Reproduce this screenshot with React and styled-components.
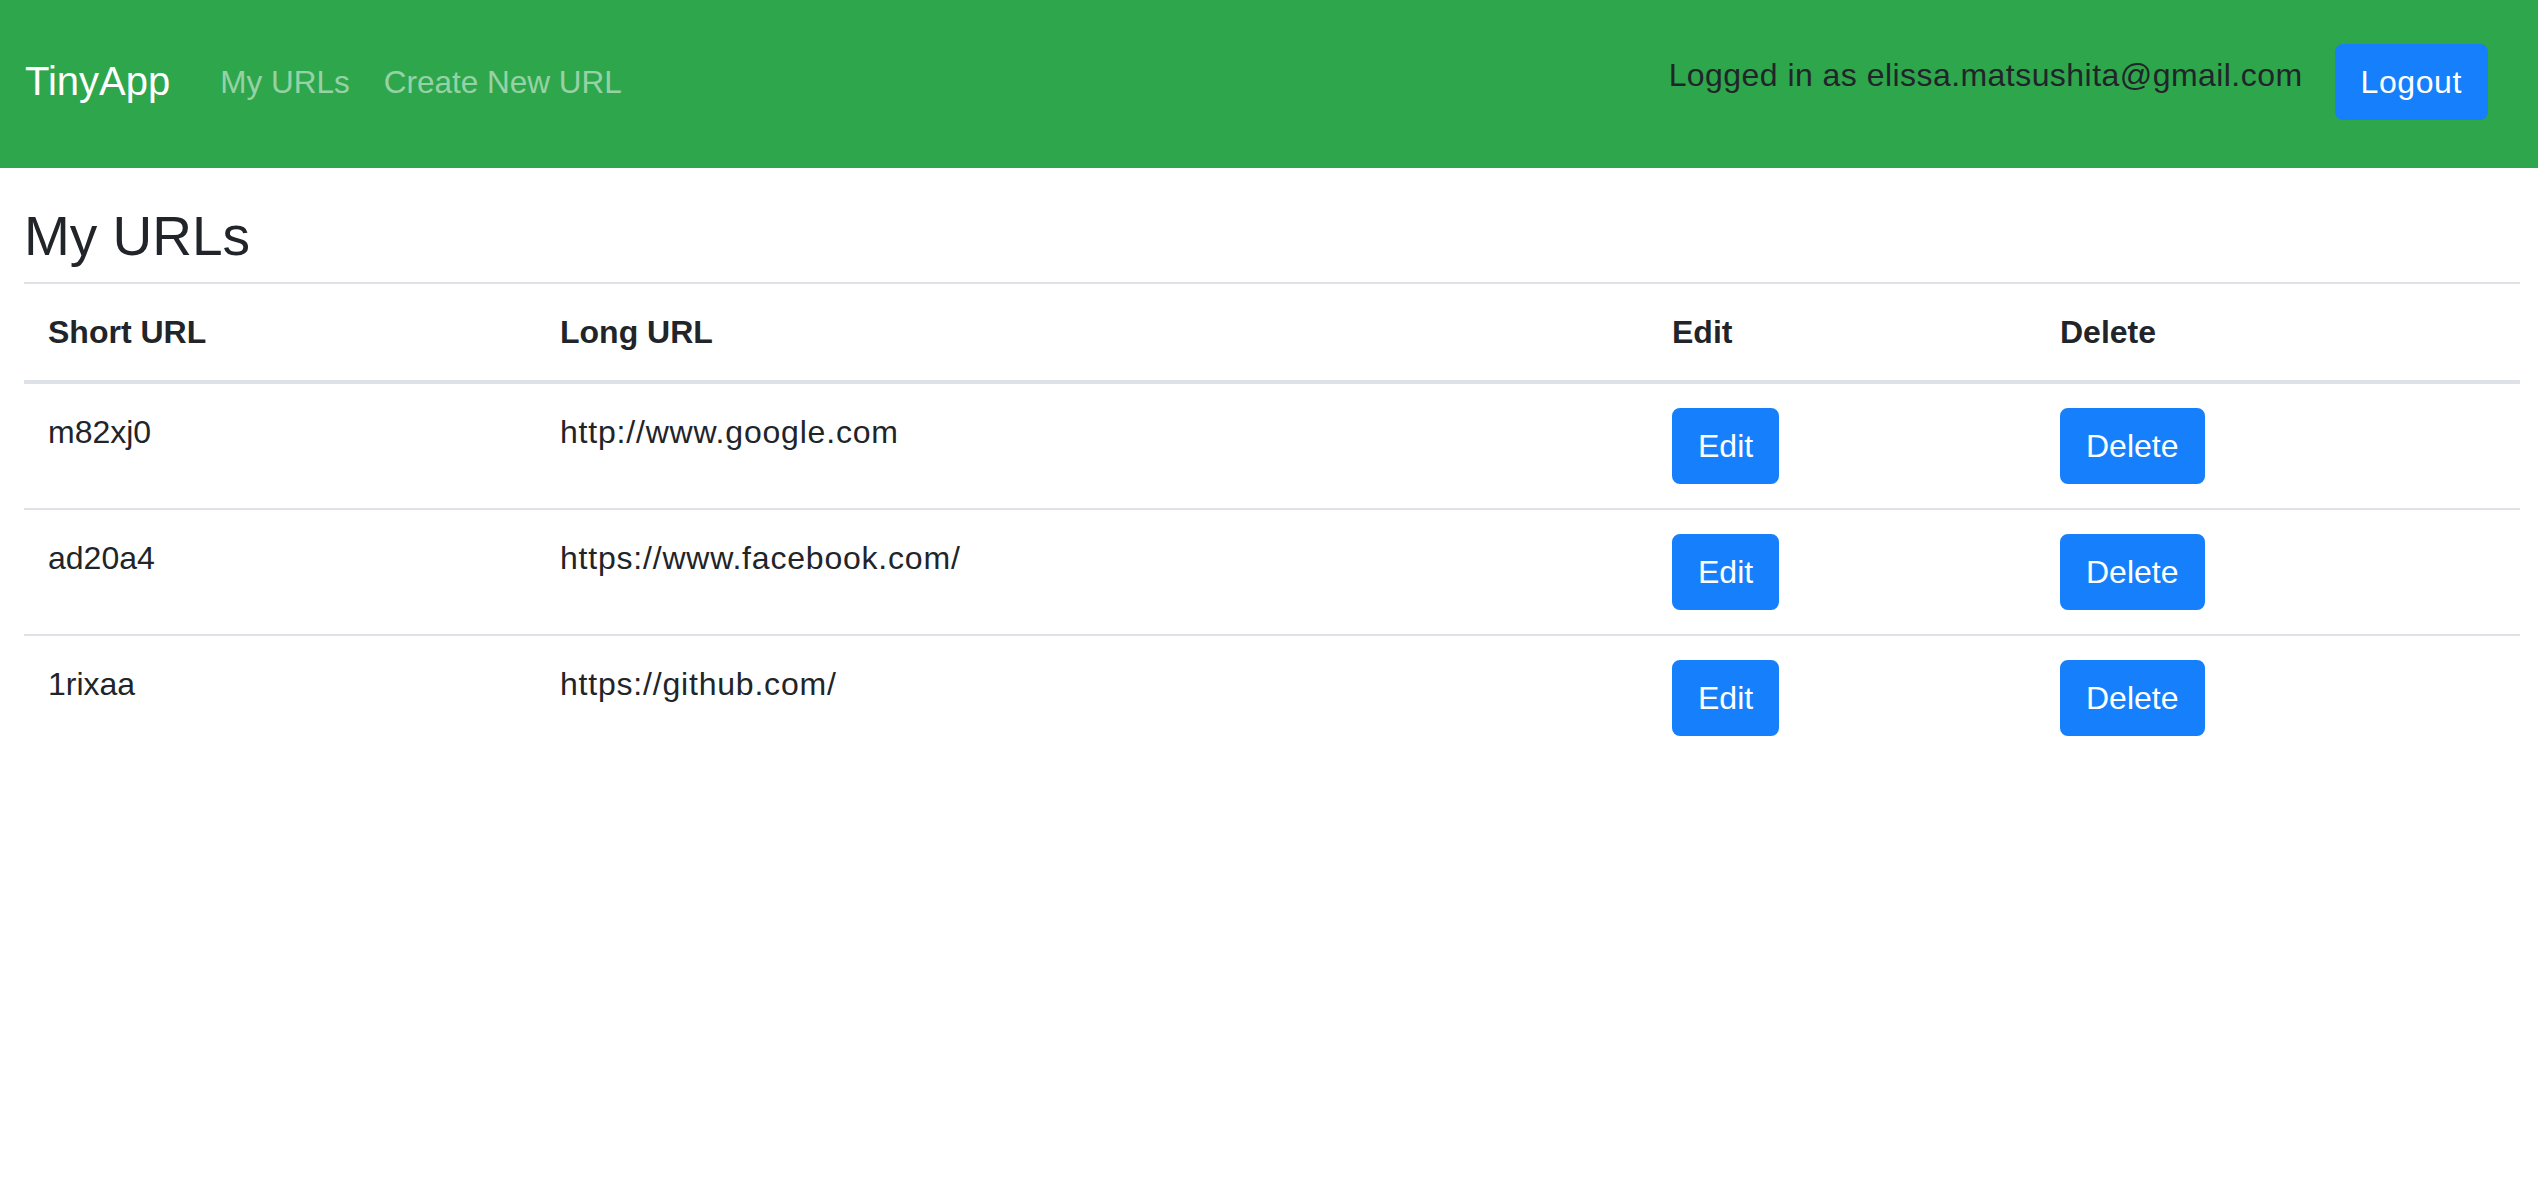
import React from "react";
import styled, { createGlobalStyle } from "styled-components";

const GlobalStyle = createGlobalStyle`
  html, body {
    margin: 0;
    padding: 0;
    background: #ffffff;
  }
  body {
    font-family: "Liberation Sans", Arial, sans-serif;
    color: #212529;
  }
  * { box-sizing: border-box; }
`;

const NavBar = styled.nav`
  display: flex;
  align-items: center;
  height: 168px;
  padding: 0 50px 0 25px;
  background: #2ea64c;
`;

const Brand = styled.a`
  font-size: 40px;
  line-height: 60px;
  color: #ffffff;
  text-decoration: none;
  margin-right: 50px;
  margin-bottom: 6px;
`;

const NavLinks = styled.div`
  display: flex;
  gap: 34px;
  margin-bottom: 4px;
`;

const NavLink = styled.a`
  font-size: 31.5px;
  line-height: 48px;
  color: rgba(255, 255, 255, 0.5);
  text-decoration: none;
`;

const Spacer = styled.div`
  flex: 1;
`;

const UserText = styled.span`
  font-size: 32px;
  line-height: 48px;
  letter-spacing: 0.45px;
  color: #212529;
  margin-right: 32px;
  margin-bottom: 18px;
`;

const Button = styled.button`
  display: inline-flex;
  align-items: center;
  justify-content: center;
  height: 76px;
  padding: 0 24px;
  font-family: inherit;
  font-size: 32px;
  line-height: 48px;
  letter-spacing: ${(p) => (p.$nav ? "0.6px" : "0")};
  color: #ffffff;
  background: #167ffc;
  border: 2px solid #167ffc;
  border-radius: 8px;
  cursor: pointer;
  margin-bottom: ${(p) => (p.$nav ? "4px" : "0")};
`;

const Main = styled.main`
  padding: 35px 18px 0 24px;
`;

const Heading = styled.h3`
  margin: 0 0 13px;
  font-size: 55px;
  line-height: 66px;
  font-weight: 400;
  color: #212529;
`;

const Table = styled.table`
  width: 100%;
  border-collapse: collapse;
  table-layout: fixed;
`;

const Th = styled.th`
  padding: 24px;
  text-align: left;
  font-size: 32px;
  line-height: 48px;
  font-weight: 700;
  color: #212529;
  vertical-align: bottom;
  border-top: 2px solid #dee2e6;
  border-bottom: 4px solid #dee2e6;
`;

const Td = styled.td`
  padding: 24px;
  font-size: 32px;
  line-height: 48px;
  letter-spacing: ${(p) => (p.$url ? "0.8px" : "0")};
  color: #212529;
  vertical-align: top;
  border-top: 2px solid #dee2e6;
`;

const CellActions = styled.div`
  display: flex;
`;

const rows = [
  { short: "m82xj0", long: "http://www.google.com" },
  { short: "ad20a4", long: "https://www.facebook.com/" },
  { short: "1rixaa", long: "https://github.com/" },
];

export default function App() {
  return (
    <>
      <GlobalStyle />
      <NavBar>
        <Brand href="#">TinyApp</Brand>
        <NavLinks>
          <NavLink href="#">My URLs</NavLink>
          <NavLink href="#">Create New URL</NavLink>
        </NavLinks>
        <Spacer />
        <UserText>Logged in as elissa.matsushita@gmail.com</UserText>
        <Button $nav>Logout</Button>
      </NavBar>
      <Main>
        <Heading>My URLs</Heading>
        <Table>
          <colgroup>
            <col style={{ width: "512px" }} />
            <col style={{ width: "1112px" }} />
            <col style={{ width: "388px" }} />
            <col />
          </colgroup>
          <thead>
            <tr>
              <Th>Short URL</Th>
              <Th>Long URL</Th>
              <Th>Edit</Th>
              <Th>Delete</Th>
            </tr>
          </thead>
          <tbody>
            {rows.map((r) => (
              <tr key={r.short}>
                <Td>{r.short}</Td>
                <Td $url>{r.long}</Td>
                <Td>
                  <CellActions>
                    <Button>Edit</Button>
                  </CellActions>
                </Td>
                <Td>
                  <CellActions>
                    <Button>Delete</Button>
                  </CellActions>
                </Td>
              </tr>
            ))}
          </tbody>
        </Table>
      </Main>
    </>
  );
}
